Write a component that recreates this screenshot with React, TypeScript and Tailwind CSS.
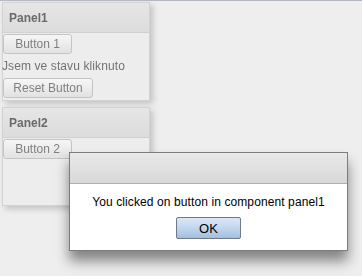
import React from "react"

const font = { fontFamily: '"Liberation Sans", Arial, sans-serif' }

function GrayButton({ label, width }: { label: string; width: string }) {
  return (
    <button
      className={`${width} h-[20px] rounded-[3px] border border-[#c4c4c4] bg-gradient-to-b from-[#f6f6f6] to-[#e2e2e2] text-[12px] leading-none text-[#808080]`}
    >
      {label}
    </button>
  )
}

function Panel({ title, children }: { title: string; children: React.ReactNode }) {
  return (
    <div className="w-[148px] h-[99px] ml-[2px] flex flex-col border border-[#d2d2d2] bg-[#ededed] shadow-[3px_3px_6px_rgba(0,0,0,0.18)]">
      <div className="h-[30px] shrink-0 flex items-center pl-[6px] border-b border-[#d0d0d0] bg-gradient-to-b from-[#e6e6e6] to-[#dcdcdc] text-[12px] font-bold text-[#6a6a6a]">
        {title}
      </div>
      <div className="flex flex-col items-start pt-[1px]">{children}</div>
    </div>
  )
}

export default function App() {
  return (
    <div className="relative w-[362px] h-[276px] overflow-hidden bg-[#eeeeee] border-t border-[#b4b8c4]" style={font}>
      <div className="flex flex-col gap-[6px] pt-[1px] blur-[0.4px]">
        <Panel title="Panel1">
          <GrayButton label="Button 1" width="w-[69px]" />
          <div className="h-[24px] flex items-center -ml-[1px] text-[12px] tracking-[0.1px] text-[#727272]">Jsem ve stavu kliknuto</div>
          <GrayButton label="Reset Button" width="w-[90px]" />
        </Panel>
        <Panel title="Panel2">
          <GrayButton label="Button 2" width="w-[69px]" />
        </Panel>
      </div>

      {/* modal dialog */}
      <div className="absolute left-[69px] top-[151px] w-[279px] h-[99px] flex flex-col border border-[#7c7c7c] bg-white shadow-[0_10px_12px_rgba(0,0,0,0.45)]">
        <div className="h-[31px] shrink-0 border-b border-[#b0b0b0] bg-gradient-to-b from-[#e9e9e9] to-[#d8d8d8]" />
        <div className="flex flex-col items-center pt-[11px]">
          <div className="text-[12px] leading-[14px] tracking-[0.1px] text-black">You clicked on button in component panel1</div>
          <button className="mt-[8px] w-[65px] h-[22px] rounded-[2px] border border-[#6e7a88] bg-gradient-to-b from-[#dbe8f6] via-[#c2d6ec] to-[#a2bfe0] text-[13px] leading-none text-black">
            OK
          </button>
        </div>
      </div>
    </div>
  )
}
